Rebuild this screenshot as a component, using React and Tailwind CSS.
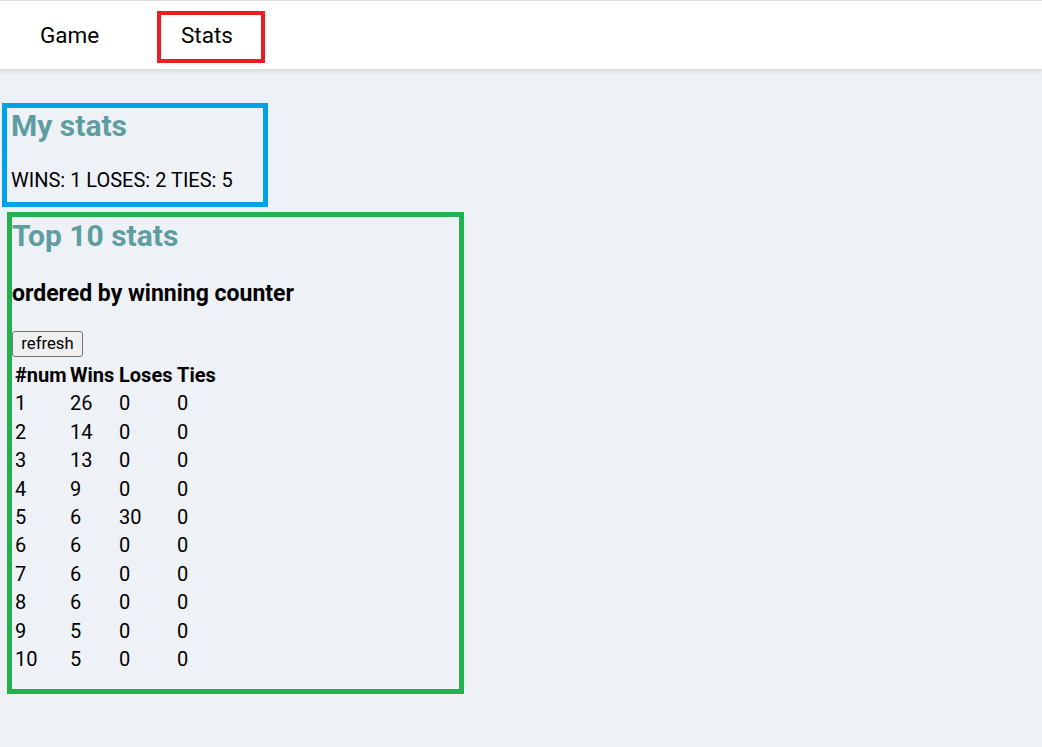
const rows = [
  [1, 26, 0, 0],
  [2, 14, 0, 0],
  [3, 13, 0, 0],
  [4, 9, 0, 0],
  [5, 6, 30, 0],
  [6, 6, 0, 0],
  [7, 6, 0, 0],
  [8, 6, 0, 0],
  [9, 5, 0, 0],
  [10, 5, 0, 0],
]

export default function App() {
  return (
    <div className="min-h-[747px] bg-[#eef1f6] font-['Roboto',sans-serif] text-black">
      {/* ── Nav ── */}
      <nav className="flex h-[69px] items-start border-t border-[#dcdcdc] bg-white shadow-[0_2px_4px_rgba(0,0,0,0.12)]">
        <a className="ml-[40px] mt-[23px] w-[60px] text-[22.5px] leading-none">Game</a>
        <a className="ml-[57px] mt-[10px] flex h-[52px] w-[108px] items-center border-4 border-[#ed1c24] pb-[3px] pl-[20px] text-[22.5px] leading-none">
          Stats
        </a>
      </nav>

      {/* ── My stats ── */}
      <section className="ml-[2px] mt-[34px] w-[266px] border-[5px] border-[#00a2e8] pb-[10px] pl-[4px]">
        <h2 className="text-[30px] font-bold leading-[36px] text-[#5f9ea0]">My stats</h2>
        <p className="mt-[24px] text-[20px] leading-[24px]">WINS: 1 LOSES: 2 TIES: 5</p>
      </section>

      {/* ── Top 10 ── */}
      <section className="ml-[7px] mt-[5px] w-[457px] border-[5px] border-[#22b14c] pb-[16px] pt-[1px]">
        <h2 className="text-[30px] font-bold leading-[36px] text-[#5f9ea0]">Top 10 stats</h2>
        <h3 className="mt-[26px] text-[23px] font-bold leading-[28px]">ordered by winning counter</h3>
        <button className="mt-[23px] h-[26px] w-[71px] rounded-[3px] border border-[#767676] bg-[#efefef] text-[16.7px] leading-none">
          refresh
        </button>
        <div className="ml-[3px] mt-[4px] grid grid-cols-[55px_49px_58px_60px] text-[20px] leading-[28.4px]">
          <div className="font-bold">#num</div>
          <div className="font-bold">Wins</div>
          <div className="font-bold">Loses</div>
          <div className="font-bold">Ties</div>
          {rows.map((r) =>
            r.map((v, i) => (
              <div key={`${r[0]}-${i}`} className="h-[28.4px]">
                {v}
              </div>
            ))
          )}
        </div>
      </section>
    </div>
  )
}
